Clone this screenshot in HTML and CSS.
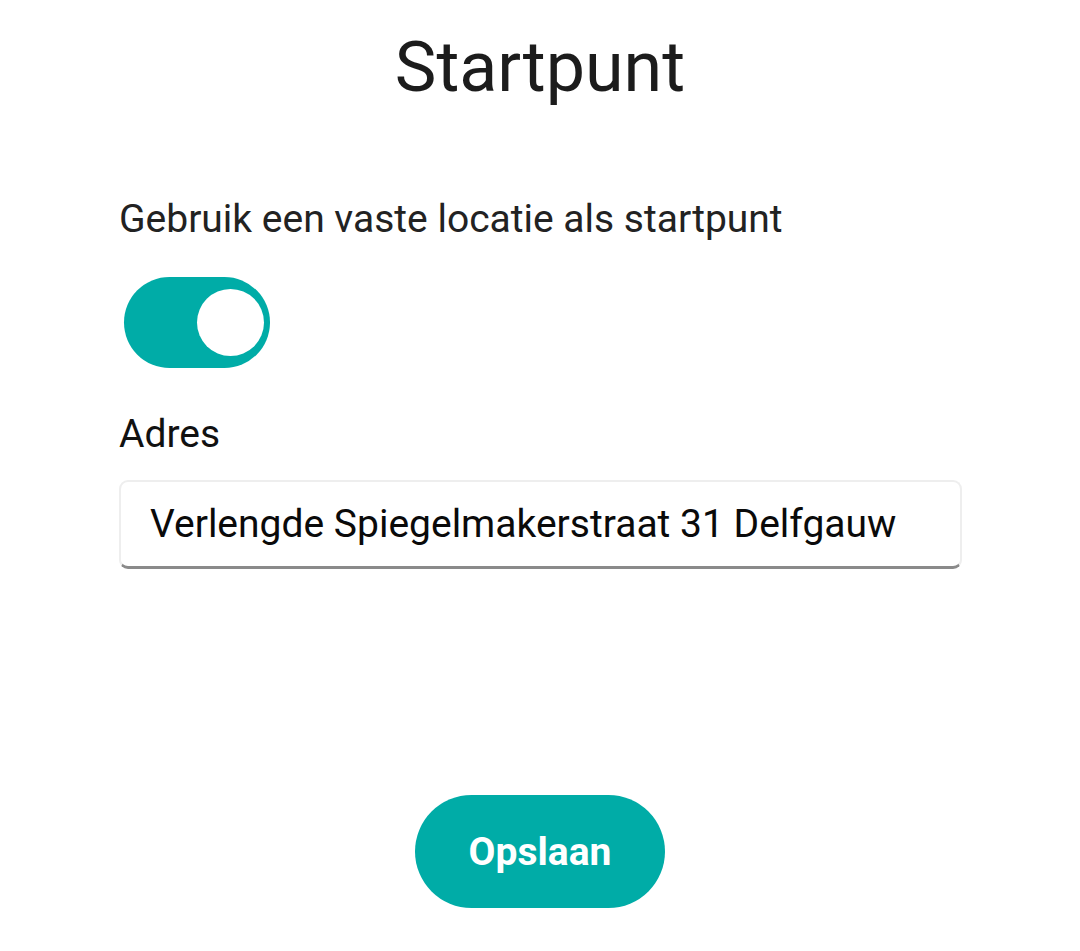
FILE: index.html
```html
<!DOCTYPE html>
<html lang="nl">
<head>
<meta charset="utf-8">
<title>Startpunt</title>
<link rel="stylesheet" href="styles.css">
</head>
<body>
<main class="page">
  <h1 class="title">Startpunt</h1>
  <section class="form">
    <p class="label">Gebruik een vaste locatie als startpunt</p>
    <div class="toggle" role="switch" aria-checked="true"><span class="knob"></span></div>
    <label class="field-label" for="adres">Adres</label>
    <div class="input">Verlengde Spiegelmakerstraat 31 Delfgauw</div>
  </section>
  <div class="actions">
    <button class="btn">Opslaan</button>
  </div>
</main>
</body>
</html>
```

FILE: styles.css
```css
* { box-sizing: border-box; }
html, body { margin: 0; padding: 0; background: #fff; }
body { font-family: Roboto, "Noto Sans", sans-serif; }
.page { width: 1080px; height: 951px; display: flex; flex-direction: column; }
.title {
  margin: 32px 0 0;
  font-size: 70px;
  line-height: 70px;
  font-weight: 400;
  color: #1c1c1c;
  text-align: center;
}
.form { padding: 0 119px 0 119px; display: flex; flex-direction: column; align-items: flex-start; }
.label {
  margin: 97px 0 0;
  font-size: 39px;
  line-height: 40px;
  color: #222;
}
.toggle {
  margin: 38px 0 0 5px;
  width: 146px;
  height: 91px;
  border-radius: 46px;
  background: #00aca7;
  display: flex;
  align-items: center;
  justify-content: flex-end;
  padding-right: 6px;
}
.knob { width: 67px; height: 67px; border-radius: 50%; background: #fff; }
.field-label {
  margin-top: 46px;
  font-size: 39px;
  line-height: 40px;
  color: #111;
}
.input {
  margin-top: 26px;
  width: 843px;
  height: 89px;
  border: 2px solid #eeeeee;
  border-bottom: 3px solid #8a8a8a;
  border-radius: 9px;
  padding: 0 0 0 29px;
  display: flex;
  align-items: center;
  font-size: 39px;
  color: #0a0a0a;
}
.actions { flex: 1; display: flex; justify-content: center; align-items: flex-end; padding-bottom: 43px; }
.btn {
  width: 250px;
  height: 113px;
  border: none;
  border-radius: 57px;
  background: #00aca7;
  color: #fff;
  font-family: Roboto, sans-serif;
  font-weight: 700;
  font-size: 39px;
  padding: 0;
}
```
